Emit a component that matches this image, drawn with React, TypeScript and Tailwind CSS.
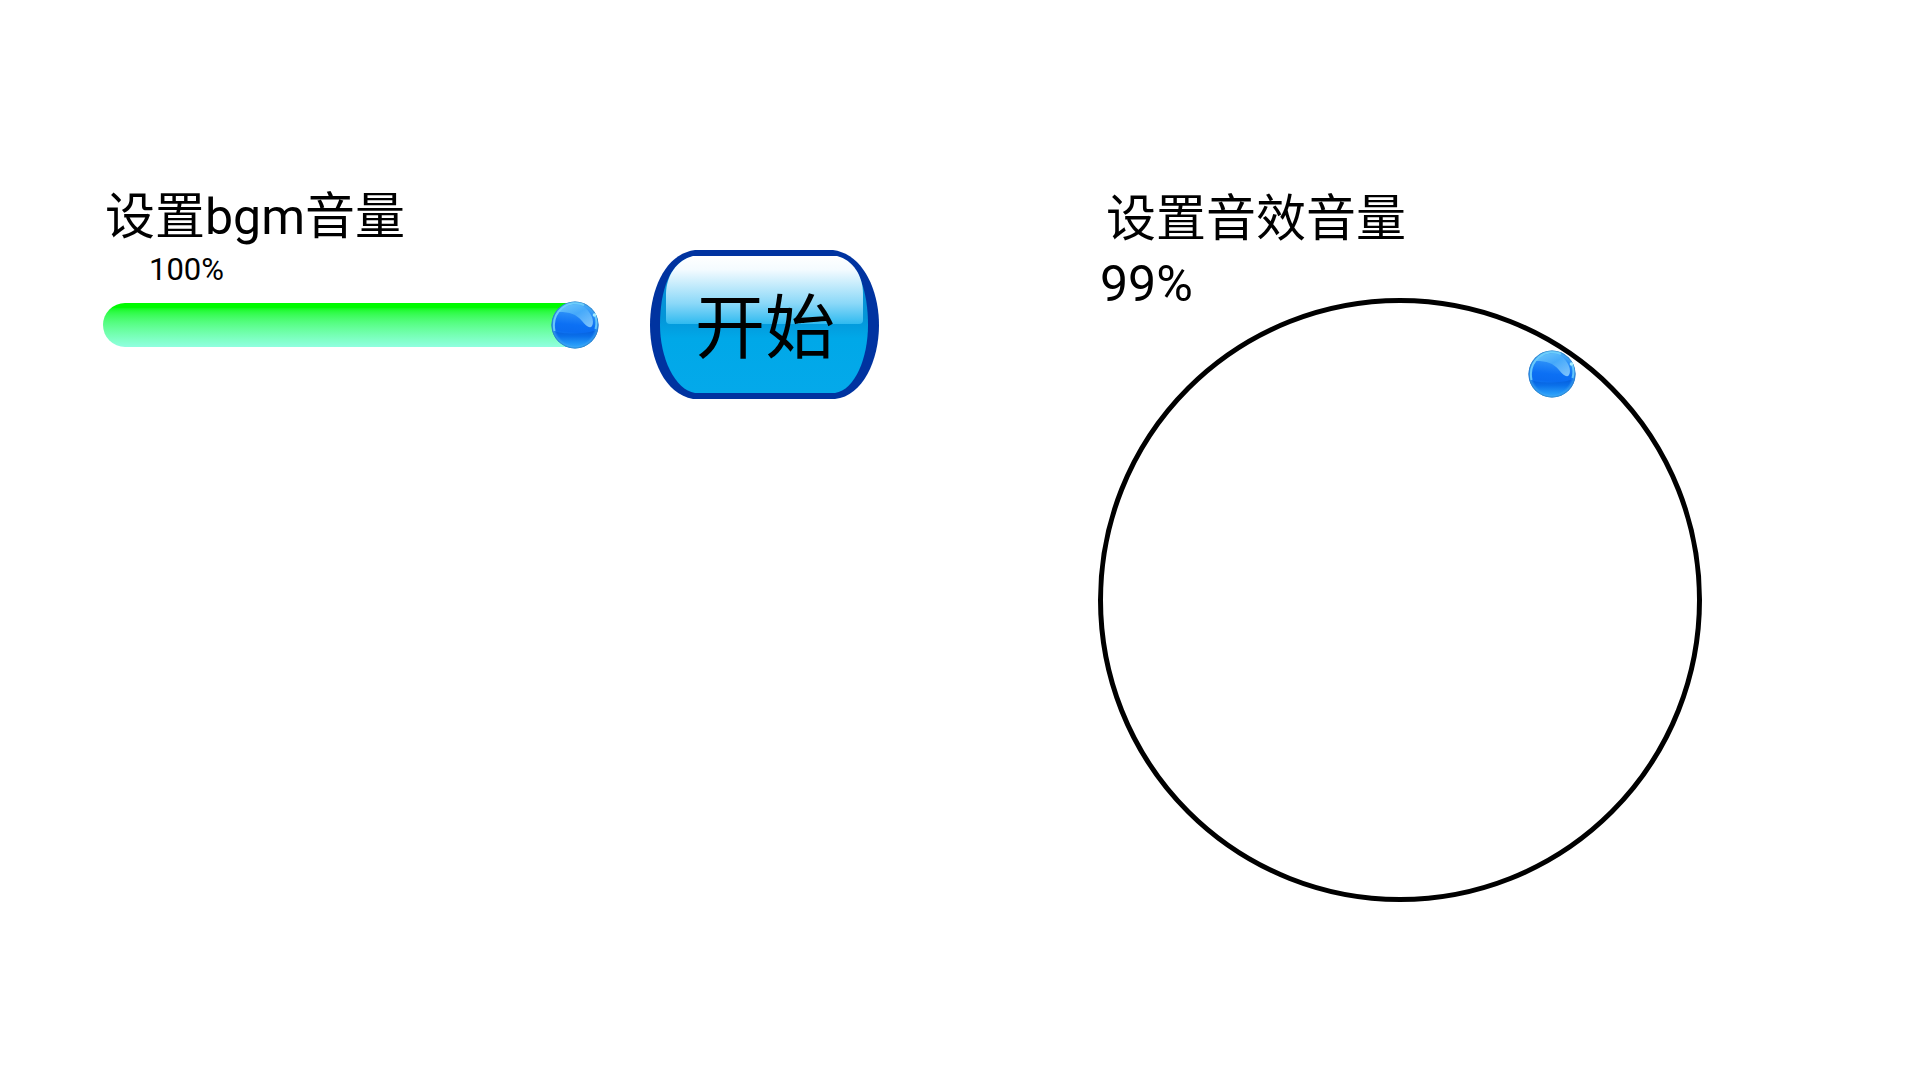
import { useState } from "react";

function Ball({ id }: { id: string }) {
  return (
    <svg viewBox="0 0 48 48" className="block size-12" aria-hidden="true">
      <defs>
        <linearGradient id={`${id}-body`} x1="0.55" y1="0" x2="0.45" y2="1">
          <stop offset="0" stopColor="#5cbcfa" />
          <stop offset="0.25" stopColor="#2a8ef8" />
          <stop offset="0.5" stopColor="#0c70f4" />
          <stop offset="0.65" stopColor="#0a6cf0" />
          <stop offset="1" stopColor="#2ba4fa" />
        </linearGradient>
        <radialGradient id={`${id}-rim`} cx="0.5" cy="0.5" r="0.5">
          <stop offset="0.82" stopColor="#2a90f0" stopOpacity="0" />
          <stop offset="0.93" stopColor="#3fa6f4" stopOpacity="0.6" />
          <stop offset="1" stopColor="#2a78b8" stopOpacity="0.9" />
        </radialGradient>
        <linearGradient id={`${id}-low`} x1="0" y1="0" x2="0" y2="1">
          <stop offset="0" stopColor="#055cdc" />
          <stop offset="0.35" stopColor="#0a70ea" />
          <stop offset="1" stopColor="#30acff" />
        </linearGradient>
        <linearGradient id={`${id}-gloss`} x1="0.1" y1="0" x2="0.9" y2="1">
          <stop offset="0" stopColor="#6fc8fc" />
          <stop offset="0.45" stopColor="#4aadfa" />
          <stop offset="1" stopColor="#8fd0fd" />
        </linearGradient>
      </defs>
      <circle cx="24" cy="24" r="23.5" fill={`url(#${id}-body)`} />
      <path d="M2 30 C12 33.5 34 33.5 46 29 C44 40 35 47 24 47 C13 47 4 40 2 30 Z" fill={`url(#${id}-low)`} />
      <circle cx="24" cy="24" r="23.5" fill={`url(#${id}-rim)`} />
      <path d="M8 11 C14 4 26 1 33 6 C40 11 44 20 41 25 C39 28 35 25 31 20 C25 13 19 11 8 11 Z" fill={`url(#${id}-gloss)`} opacity="0.85" />
      <path d="M3.5 30 C1.5 20 5 12 11 7 C18 1.5 27 1 33 4" fill="none" stroke="#74d4fc" strokeWidth="2" opacity="0.85" />
      <path d="M44.5 28 C46 23 45.5 18 44 14" fill="none" stroke="#74d4fc" strokeWidth="2" opacity="0.8" />
      <circle cx="43.5" cy="14" r="1.8" fill="#a5ecff" />
    </svg>
  );
}

function StartButton() {
  return (
    <button type="button" className="relative mt-[70px] h-[150px] w-[230px] shrink-0">
      <svg viewBox="0 0 230 150" className="absolute inset-0 size-full" aria-hidden="true">
        <defs>
          <linearGradient id="face" x1="0" y1="0" x2="0" y2="1">
            <stop offset="0" stopColor="#0a8fd8" />
            <stop offset="0.45" stopColor="#0495d8" />
            <stop offset="0.6" stopColor="#00a8e8" />
            <stop offset="1" stopColor="#04a9ea" />
          </linearGradient>
          <linearGradient id="shine" x1="0" y1="0" x2="0" y2="1">
            <stop offset="0" stopColor="#ffffff" />
            <stop offset="0.2" stopColor="#f4fbff" />
            <stop offset="0.7" stopColor="#8ad8f8" />
            <stop offset="1" stopColor="#2fbaf0" />
          </linearGradient>
        </defs>
        <path d="M46 0 H184 C214 4 230 40 230 75 C230 110 214 146 186 149 H44 C16 144 1 110 1 75 C1 40 16 4 46 0 Z" fill="#0033a0" />
        <path d="M46 6 H186 C210 10 219 42 219 75 C219 108 206 140 186 143 H46 C26 140 11 108 11 75 C11 42 20 10 46 6 Z" fill="url(#face)" />
        <path d="M44 6 H188 C204 10 214 26 214 44 V70 Q214 74 210 74 H21 Q17 74 17 70 V44 C17 26 28 10 44 6 Z" fill="url(#shine)" />
      </svg>
      <span className="relative block pt-2 pl-0.5 text-[70px] leading-none">开始</span>
    </button>
  );
}

export default function App() {
  const [bgm, setBgm] = useState(100);
  const [effects, setEffects] = useState(99);

  return (
    <main className="grid min-h-screen grid-cols-[11fr_9fr] bg-white pt-[180px] font-['Roboto','Noto_Sans_CJK_SC',sans-serif] text-black">
      <section className="flex items-start gap-12 pl-[103px]">
        <div className="w-[498px]">
          <label htmlFor="bgm" className="block pt-0.5 pl-0.5 text-[50px] leading-[70px]">
            设置bgm音量
          </label>
          <output htmlFor="bgm" className="block pl-[46px] text-[31px] leading-9">
            {bgm}%
          </output>
          <div className="relative mt-[13px] flex h-12 items-center">
            <div className="h-11 w-[473px] rounded-l-full bg-linear-to-b from-[#00fa00] from-10% to-[#90ffe0]" />
            <div className="absolute top-0 -translate-x-12" style={{ left: `${(bgm * 496) / 100}px` }}>
              <Ball id="bgm-ball" />
            </div>
            <input
              id="bgm"
              type="range"
              min="0"
              max="100"
              value={bgm}
              onChange={(e) => setBgm(Number(e.target.value))}
              className="absolute inset-0 size-full cursor-pointer opacity-0"
            />
          </div>
        </div>
        <StartButton />
      </section>

      <section className="pl-[42px]">
        <label htmlFor="effects" className="block pt-1 pl-2 text-[50px] leading-[70px]">
          设置音效音量
        </label>
        <output htmlFor="effects" className="block pl-0.5 text-[50px] leading-[60px]">
          {effects}%
        </output>
        <div className="relative -mt-4 size-[604px]">
          <svg viewBox="0 0 604 604" className="block size-full" aria-hidden="true">
            <circle cx="302" cy="302" r="299.5" fill="none" stroke="#000" strokeWidth="5" />
          </svg>
          <div className="absolute top-[52px] left-[430px]">
            <Ball id="effects-ball" />
          </div>
          <input
            id="effects"
            type="range"
            min="0"
            max="100"
            value={effects}
            onChange={(e) => setEffects(Number(e.target.value))}
            className="absolute inset-0 size-full cursor-pointer opacity-0"
          />
        </div>
      </section>
    </main>
  );
}
